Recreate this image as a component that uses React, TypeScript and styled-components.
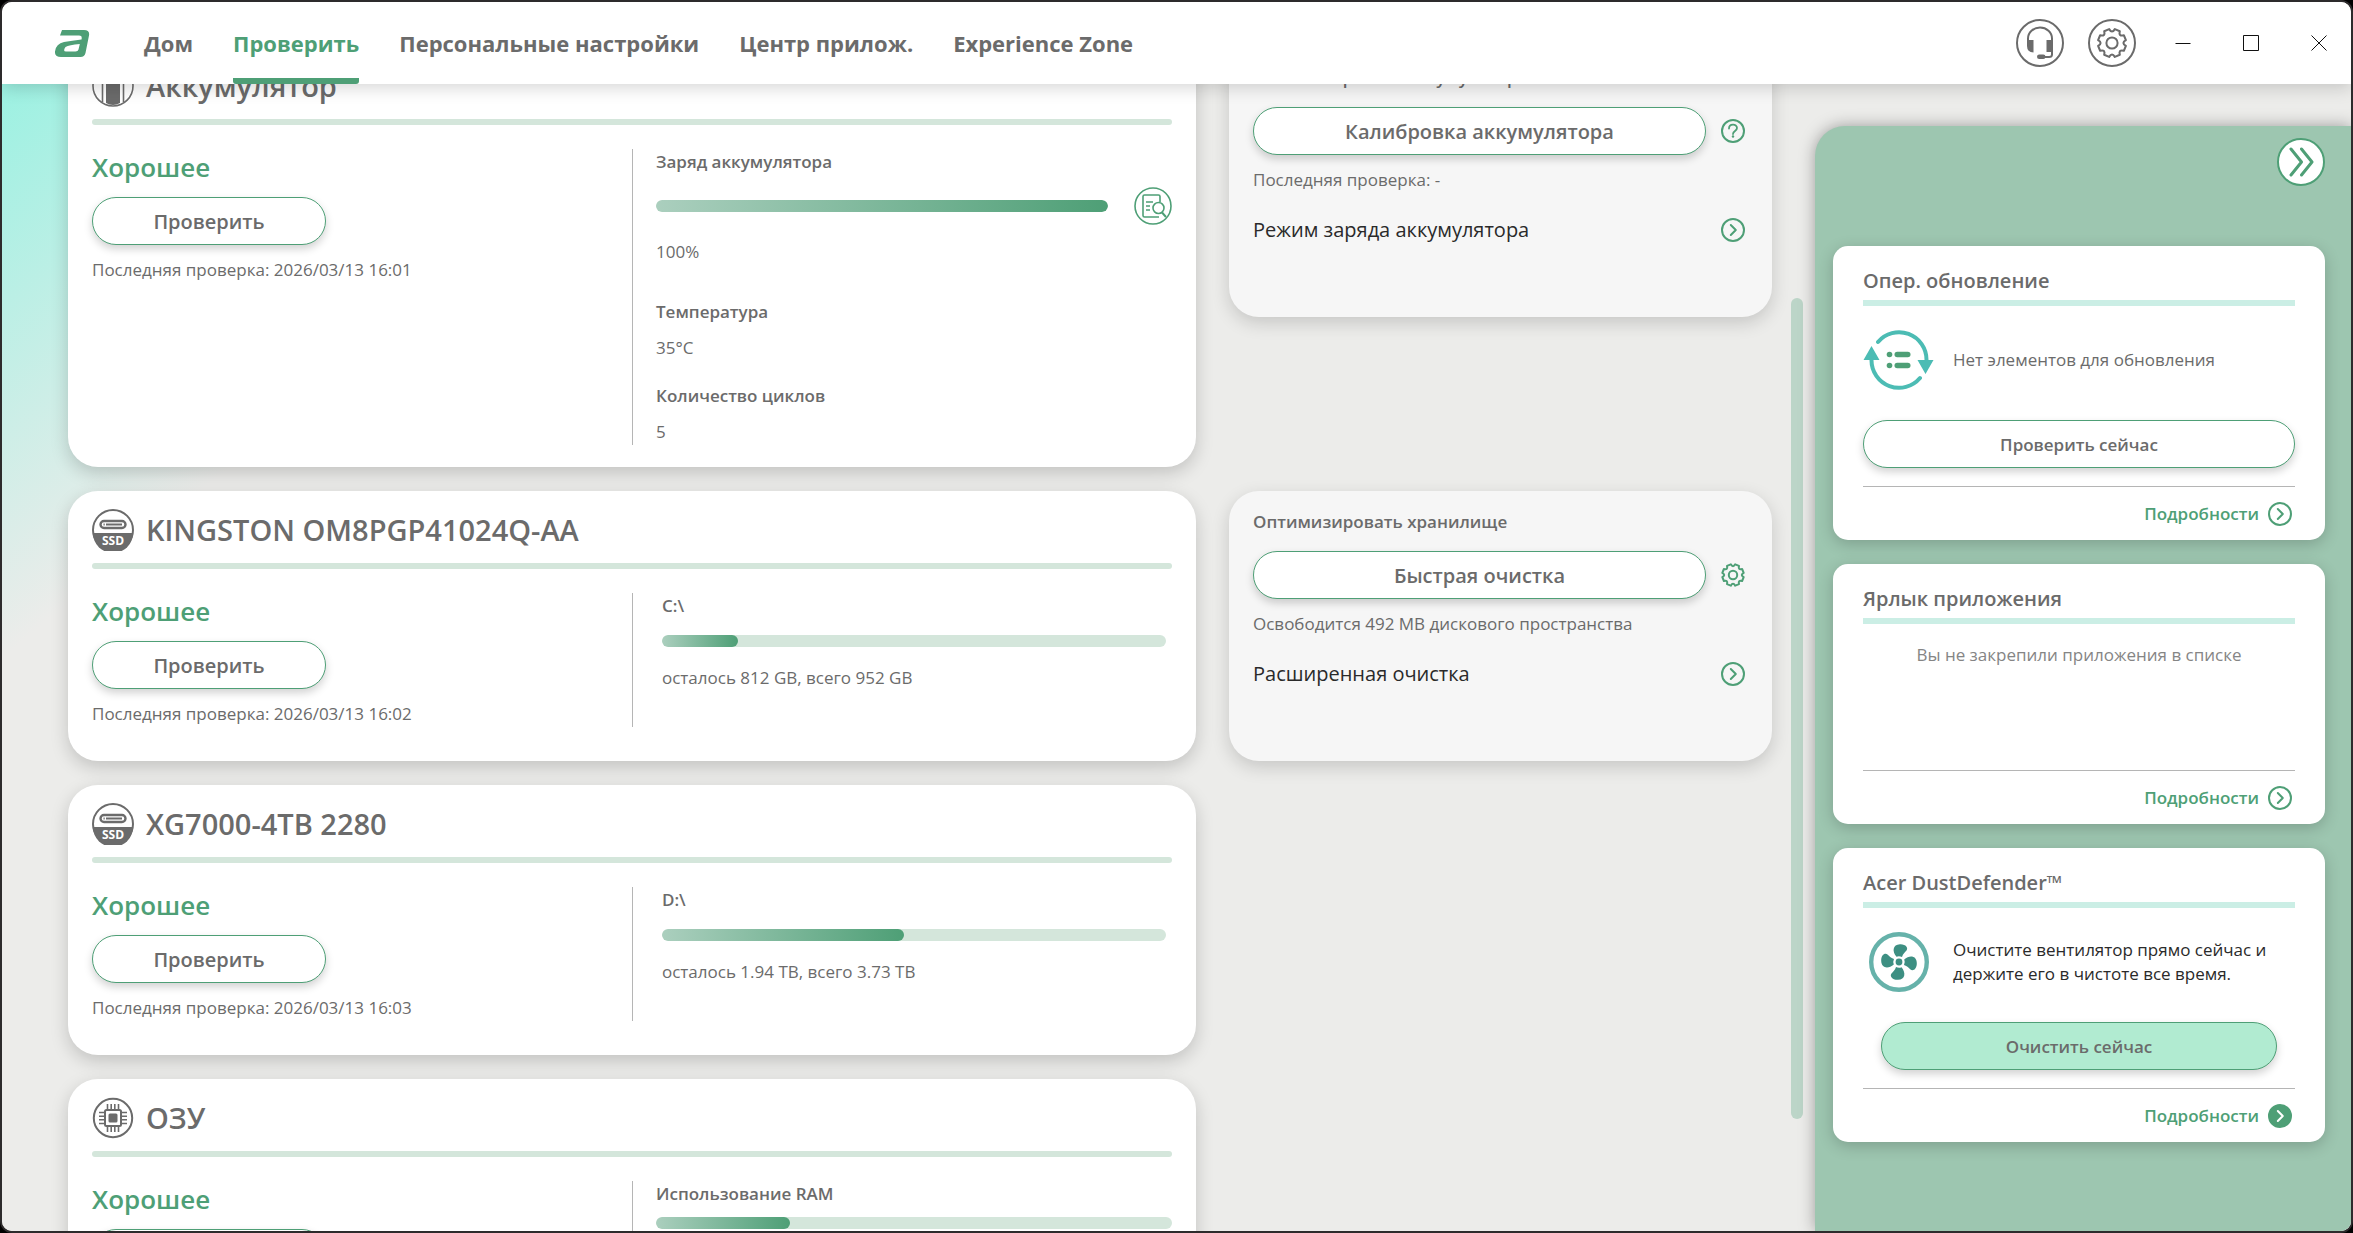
import React, { useLayoutEffect, useRef } from "react";
import styled, { createGlobalStyle } from "styled-components";

const green = "#4e9f76";
const grey = "#6b6b6b";

const GlobalStyle = createGlobalStyle`
  *, *::before, *::after { box-sizing: border-box; }
  html, body, #root { height: 100%; }
  body { margin: 0; background: #000; overflow: hidden; }
  body, button { font-family: "Open Sans", "Noto Sans", sans-serif; }
  h1, h2, h3, p { margin: 0; }
  button { padding: 0; border: 0; background: none; color: inherit; cursor: pointer; }
  svg { display: block; flex: none; }
`;

const Window = styled.div`
  display: flex;
  flex-direction: column;
  height: 100vh;
  border: 2px solid #2d2b2c;
  border-radius: 12px;
  overflow: hidden;
  background: #ececea;
  color: ${grey};
`;

const TopBar = styled.header`
  display: flex;
  align-items: stretch;
  flex: none;
  height: 82px;
  padding: 0 24px 0 53px;
  background: #fff;
  box-shadow: 0 4px 16px rgba(0, 0, 0, 0.16);
  position: relative;
  z-index: 2;
`;

const Logo = styled.div`
  display: flex;
  align-items: center;
  margin-right: 54px;
`;

const Nav = styled.nav`
  display: flex;
  gap: 40px;
  flex: 1;
`;

const NavLink = styled.a<{ $active?: boolean }>`
  display: flex;
  align-items: center;
  height: 82px;
  border-top: 6px solid transparent;
  border-bottom: 6px solid transparent;
  border-radius: 3px;
  font-size: 22px;
  line-height: 32px;
  font-weight: 700;
  text-decoration: none;
  white-space: nowrap;
  color: ${(p) => (p.$active ? green : grey)};
  background: ${(p) => (p.$active ? `linear-gradient(${green}, ${green}) bottom / 100% 6px no-repeat border-box` : "none")};
`;

const BarActions = styled.div`
  display: flex;
  align-items: center;
  gap: 24px;
  margin-right: 39px;
`;

const WindowActions = styled.div`
  display: flex;
  align-items: center;
  gap: 52px;
`;

const IconButton = styled.button`
  display: flex;
  align-items: center;
  justify-content: center;
  flex: none;
`;

const Main = styled.div`
  display: flex;
  flex: 1;
  min-height: 0;
  background: linear-gradient(140deg, #9cf1e2 0, #ececea 440px);
`;

const Scroller = styled.main`
  flex: 1;
  min-width: 0;
  overflow: auto;
  scrollbar-width: none;
  padding: 24px 19px 24px 66px;
`;

const Rows = styled.div`
  display: grid;
  grid-template-columns: minmax(0, 1128fr) minmax(0, 543fr);
  gap: 24px 33px;
  align-items: start;
`;

const ScrollTrack = styled.div`
  display: flex;
  flex-direction: column;
  width: 12px;
  margin-right: 12px;
  &::before { content: ""; flex: 214; }
  &::after { content: ""; flex: 112; }
`;

const ScrollThumb = styled.div`
  flex: 821;
  border-radius: 6px;
  background: #bcd5c8;
`;

const Card = styled.section`
  grid-column: 1;
  min-height: 270px;
  padding: 18px 24px 22px;
  border-radius: 30px;
  background: #fff;
  box-shadow: 0 6px 18px rgba(0, 0, 0, 0.18);
`;

const CardHead = styled.div`
  display: flex;
  align-items: center;
  gap: 12px;
  padding-bottom: 12px;
`;

const CardTitle = styled.h2`
  font-size: 29px;
  line-height: 42px;
  font-weight: 600;
`;

const Rule = styled.div`
  height: 6px;
  border-radius: 3px;
  background: #d4e6db;
`;

const CardBody = styled.div`
  display: grid;
  grid-template-columns: 1fr 1fr;
  margin-top: 24px;
`;

const StatusColumn = styled.div`
  display: flex;
  flex-direction: column;
  align-items: flex-start;
  gap: 12px;
`;

const Status = styled.p`
  font-size: 26px;
  line-height: 36px;
  font-weight: 600;
  color: ${green};
`;

const PillButton = styled.button<{ $width?: string; $small?: boolean; $filled?: boolean }>`
  width: ${(p) => p.$width ?? "100%"};
  height: 48px;
  padding-top: 2px;
  border: 1px solid ${green};
  border-radius: 24px;
  background: ${(p) => (p.$filled ? "#b1ebd1" : "#fff")};
  box-shadow: 0 4px 8px rgba(0, 0, 0, 0.18);
  font-size: ${(p) => (p.$small ? "17px" : "20px")};
  line-height: 28px;
  font-weight: 600;
  color: ${grey};
`;

const Note = styled.p`
  font-size: 17px;
  line-height: 26px;
`;

const Label = styled.h3`
  font-size: 17px;
  line-height: 26px;
  font-weight: 600;
`;

const Details = styled.div`
  display: flex;
  flex-direction: column;
  padding-left: 23px;
  border-left: 1px solid #b5b5b5;
`;

const Disk = styled.div`
  display: flex;
  flex-direction: column;
  padding: 0 6px;
`;

const Memory = styled.div`
  display: flex;
  flex-direction: column;
  gap: 10px;
`;

const ChargeRow = styled.div`
  display: flex;
  align-items: center;
  gap: 26px;
  margin: 12px 0 14px;
`;

const Fact = styled.div<{ $gap: number }>`
  display: flex;
  flex-direction: column;
  gap: 10px;
  margin-top: ${(p) => p.$gap}px;
`;

const Track = styled.div`
  flex: 1 0 auto;
  height: 12px;
  max-height: 12px;
  border-radius: 6px;
  background: #d4e6db;
  overflow: hidden;

  ${Disk} & {
    margin: 16px 0 18px;
  }
`;

const Fill = styled.div`
  height: 100%;
  border-radius: 6px;
  background: linear-gradient(90deg, #abcfbe, ${green});
`;

const ToolCard = styled.section`
  grid-column: 2;
  min-height: 270px;
  padding: 18px 27px 24px 24px;
  border-radius: 30px;
  background: #f6f6f6;
  box-shadow: 0 6px 18px rgba(0, 0, 0, 0.16);
`;

const ToolAction = styled.div`
  display: flex;
  align-items: center;
  gap: 15px;
  margin: 16px 0 12px;
  color: ${green};
`;

const ToolLink = styled.button`
  display: flex;
  align-items: center;
  justify-content: space-between;
  width: 100%;
  margin-top: 22px;
  font-size: 20px;
  line-height: 30px;
  color: #2a2a2a;
  svg { color: ${green}; }
`;

const Side = styled.aside`
  display: flex;
  flex-direction: column;
  flex: none;
  width: 536px;
  margin-top: 42px;
  padding: 12px 26px 0 18px;
  border-top-left-radius: 30px;
  background: #9dc6b0;
  box-shadow: 0 0 16px rgba(0, 0, 0, 0.34);
`;

const Collapse = styled(IconButton)`
  align-self: flex-end;
  width: 48px;
  height: 48px;
  border: 2px solid ${green};
  border-radius: 24px;
  background: #fff;
  color: ${green};
`;

const SideCards = styled.div`
  display: flex;
  flex-direction: column;
  gap: 24px;
  margin-top: 60px;
`;

const SideCard = styled.section<{ $minHeight: number }>`
  display: flex;
  flex-direction: column;
  min-height: ${(p) => p.$minHeight}px;
  padding: 20px 30px 0;
  border-radius: 15px;
  background: #fff;
  box-shadow: 0 4px 16px rgba(0, 0, 0, 0.2);
`;

const SideTitle = styled.h2`
  padding-bottom: 4px;
  border-bottom: 6px solid #cbeee5;
  font-size: 20px;
  line-height: 30px;
  font-weight: 600;
`;

const SideInfo = styled.div`
  display: flex;
  align-items: center;
  gap: 18px;
  height: 60px;
  margin: 24px 0 30px;
`;

const SideIcon = styled.div`
  display: flex;
  justify-content: center;
  width: 72px;
`;

const SideText = styled.p<{ $dark?: boolean }>`
  flex: 1;
  font-size: 17px;
  line-height: 24px;
  color: ${(p) => (p.$dark ? "#2a2a2a" : grey)};
`;

const SideEmpty = styled.p`
  margin-top: 18px;
  font-size: 17px;
  line-height: 26px;
  text-align: center;
  color: #858585;
`;

const Inset = styled.div`
  padding: 0 18px;
`;

const SideFoot = styled.div`
  display: flex;
  align-items: flex-start;
  justify-content: flex-end;
  height: 54px;
  margin-top: auto;
  padding: 15px 3px 0;
  border-top: 1px solid #b5b5b5;
`;

const MoreLink = styled.a`
  display: flex;
  align-items: center;
  gap: 9px;
  font-size: 17px;
  line-height: 24px;
  font-weight: 600;
  text-decoration: none;
  color: ${green};
`;

const AcerMark = () => (
  <svg width="35" height="27" viewBox="0 0 35 27" fill={green} fillRule="evenodd" aria-hidden="true">
    <path d="M7 0H29Q35 0 34 5.500L30.500 23Q29.500 27 25.500 27H6Q-.5 27 0 21.500Q1 13.500 9 12Q17 10.500 26.500 9.500Q27.500 5.500 24 5.500H5ZM24.800 14Q14 15 10.500 17Q7.500 21.500 11 21.500H20.500Q23 21.500 23.500 19.500Z" />
  </svg>
);

const gearPath = (() => {
  const teeth = 8;
  const at = (angle: number, r: number) => `${(12 + Math.cos(angle) * r).toFixed(2)} ${(12 + Math.sin(angle) * r).toFixed(2)}`;
  let d = "";
  for (let i = 0; i < teeth; i++) {
    const a = ((i + 0.5) / teeth) * Math.PI * 2 - Math.PI / 2;
    d += `${i === 0 ? "M" : "L"}${at(a - 0.19, 10.9)}L${at(a + 0.19, 10.9)}Q${at(a + Math.PI / teeth, 6.9)} ${at(a + (2 * Math.PI) / teeth - 0.19, 10.9)}`;
  }
  return `${d}Z`;
})();

const Gear = ({ size, stroke }: { size: number; stroke: number }) => (
  <svg width={size} height={size} viewBox="0 0 24 24" fill="none" stroke="currentColor" strokeWidth={stroke} strokeLinejoin="round" aria-hidden="true">
    <path d={gearPath} />
    <circle cx="12" cy="12" r="4.200" />
  </svg>
);

const SettingsIcon = () => (
  <svg width="48" height="48" viewBox="0 0 48 48" fill="none" stroke="currentColor" strokeWidth="2" strokeLinejoin="round" aria-hidden="true">
    <circle cx="24" cy="24" r="23" />
    <path d={gearPath} transform="translate(8.400 8.400) scale(1.300)" strokeWidth="1.600" />
    <circle cx="24" cy="24" r="5.600" />
  </svg>
);

const HeadsetIcon = () => (
  <svg width="48" height="48" viewBox="0 0 48 48" fill="none" stroke="currentColor" strokeWidth="2" aria-hidden="true">
    <circle cx="24" cy="24" r="23" />
    <path d="M12 24v-4.500a12 11 0 0 1 24 0V35.500q0 2.500-3 2.500h-5" />
    <path d="M11 21h6.500v12.500Q11 33 11 27zM37 21h-6.500v12H37z" fill="currentColor" stroke="none" />
    <rect x="21" y="35.500" width="8.500" height="4.500" rx="2.200" fill="currentColor" stroke="none" />
  </svg>
);

const ArrowCircle = ({ filled }: { filled?: boolean }) => (
  <svg width="24" height="24" viewBox="0 0 24 24" fill="none" aria-hidden="true">
    <circle cx="12" cy="12" r="11" stroke="currentColor" strokeWidth="2" fill={filled ? "currentColor" : "none"} />
    <path d="M9.800 7l5 5-5 5" stroke={filled ? "#fff" : "currentColor"} strokeWidth="2" strokeLinecap="round" strokeLinejoin="round" />
  </svg>
);

const HelpIcon = () => (
  <svg width="24" height="24" viewBox="0 0 24 24" fill="none" stroke="currentColor" strokeWidth="2" aria-hidden="true">
    <circle cx="12" cy="12" r="11" />
    <path d="M8 9.500c0-5 8-5 8-.5 0 3-4 3-4 6" strokeWidth="1.800" strokeLinecap="round" />
    <circle cx="12" cy="17.500" r="1.200" fill="currentColor" stroke="none" />
  </svg>
);

const ReportIcon = () => (
  <svg width="38" height="38" viewBox="0 0 38 38" fill="none" stroke={green} strokeWidth="1.600" aria-hidden="true">
    <circle cx="19" cy="19" r="18" />
    <path d="M26 15V9.500q0-1.500-1.500-1.500h-14Q9 8 9 9.500v19q0 1.500 1.500 1.500H25" />
    <path d="M12 15h7M12 19h4M12 23h4" />
    <circle cx="24.500" cy="21" r="5.500" />
    <path d="M28 25.500l4 4.500" strokeWidth="2" />
  </svg>
);

const BatteryIcon = () => (
  <svg width="42" height="42" viewBox="0 0 42 42" fill="none" stroke={grey} strokeWidth="1.600" aria-hidden="true">
    <circle cx="21" cy="21" r="20" />
    <path d="M10.500 37V10h21v27" />
    <path d="M14 38V13h14v25q-7 4-14 0z" fill={grey} stroke="none" />
    <path d="M17 6h8v4h-8z" />
  </svg>
);

const SsdIcon = () => (
  <svg width="42" height="42" viewBox="0 0 42 42" aria-hidden="true">
    <circle cx="21" cy="21" r="20" fill="#fff" stroke={grey} strokeWidth="2" />
    <path d="M1 24h40a20 20 0 0 1-40 0z" fill={grey} />
    <rect x="8.500" y="12" width="25" height="7" rx="3.500" fill="#fff" stroke={grey} strokeWidth="2.400" />
    <path d="M14 15.500h16M11.500 15.500h1.200" stroke={grey} strokeWidth="2" />
    <text x="21" y="36" textAnchor="middle" fontFamily="Open Sans, sans-serif" fontSize="12" fontWeight="700" fill="#fff">SSD</text>
  </svg>
);

const ChipIcon = () => (
  <svg width="42" height="42" viewBox="0 0 42 42" fill="none" stroke={grey} strokeWidth="2" aria-hidden="true">
    <circle cx="21" cy="21" r="19.200" />
    <rect x="13" y="13" width="16" height="16" rx="1.500" />
    <rect x="16.500" y="16.500" width="9" height="9" rx="1.500" fill={grey} stroke="none" />
    <path
      d="M15.500 7v5M19.200 7v5M22.800 7v5M26.500 7v5M15.500 30v5M19.200 30v5M22.800 30v5M26.500 30v5M7 15.500h5M7 19.200h5M7 22.800h5M7 26.500h5M30 15.500h5M30 19.200h5M30 22.800h5M30 26.500h5"
      strokeWidth="1.600"
    />
  </svg>
);

const UpdateIcon = () => (
  <svg width="72" height="60" viewBox="0 0 72 60" fill="none" aria-hidden="true">
    <g stroke="#4cbcb4" strokeWidth="4" strokeLinecap="round">
      <path d="M15 12A27.500 27.500 0 0 1 63.500 30" />
      <path d="M57 48A27.500 27.500 0 0 1 8.500 30" />
    </g>
    <path d="M0.500 30L8.500 16l8 14zM54.500 30h16l-8 14z" fill="#4cbcb4" />
    <g fill={green}>
      <circle cx="26.500" cy="24.500" r="2.800" />
      <circle cx="26.500" cy="35.500" r="2.800" />
      <rect x="31.500" y="21.800" width="16" height="5.500" rx="2.700" />
      <rect x="31.500" y="32.800" width="16" height="5.500" rx="2.700" />
    </g>
  </svg>
);

const FanIcon = () => (
  <svg width="60" height="60" viewBox="0 0 60 60" aria-hidden="true">
    <circle cx="30" cy="30" r="27.800" fill="none" stroke="#66b2aa" strokeWidth="4.400" />
    <g fill="#3d8f82">
      {[0, 90, 180, 270].map((a) => (
        <path
          key={a}
          d="M27.500 24.800C23 19.500 23.500 12.500 31 12.200C37 12 39.500 16 37.500 18.500C36 20.500 34 21.500 33 25Q30 23.600 27.500 24.800Z"
          transform={`rotate(${a} 30 30)`}
        />
      ))}
      <circle cx="30" cy="30" r="3.400" />
    </g>
  </svg>
);

const ChevronsIcon = () => (
  <svg width="26" height="30" viewBox="0 0 26 30" fill="none" stroke="currentColor" strokeWidth="3" strokeLinecap="round" strokeLinejoin="round" aria-hidden="true">
    <path d="M3 2l10.500 13L3 28M13.500 2L24 15 13.500 28" />
  </svg>
);

const MinimizeIcon = () => (
  <svg width="16" height="16" viewBox="0 0 16 16" stroke="#111" aria-hidden="true"><path d="M.5 8.500h15" /></svg>
);
const MaximizeIcon = () => (
  <svg width="16" height="16" viewBox="0 0 16 16" fill="none" stroke="#111" aria-hidden="true"><path d="M.5.5h15v15H.5z" /></svg>
);
const CloseIcon = () => (
  <svg width="16" height="16" viewBox="0 0 16 16" stroke="#111" aria-hidden="true"><path d="M.5.5l15 15M15.500.5l-15 15" /></svg>
);

const Progress = ({ value, label }: { value: number; label: string }) => (
  <Track role="progressbar" aria-label={label} aria-valuenow={value} aria-valuemin={0} aria-valuemax={100}>
    <Fill style={{ width: `${value}%` }} />
  </Track>
);

type DeviceProps = { icon: React.ReactNode; title: string; checked: string; children: React.ReactNode };

const DeviceCard = ({ icon, title, checked, children }: DeviceProps) => (
  <Card>
    <CardHead>
      {icon}
      <CardTitle>{title}</CardTitle>
    </CardHead>
    <Rule />
    <CardBody>
      <StatusColumn>
        <Status>Хорошее</Status>
        <PillButton $width="234px">Проверить</PillButton>
        <Note>Последняя проверка: {checked}</Note>
      </StatusColumn>
      <Details>{children}</Details>
    </CardBody>
  </Card>
);

const DiskUsage = ({ drive, used, text }: { drive: string; used: number; text: string }) => (
  <Disk>
    <Label>{drive}</Label>
    <Progress value={used} label={drive} />
    <Note>{text}</Note>
  </Disk>
);

type ToolProps = { title: string; action: string; note: string; link: string; icon: React.ReactNode; iconLabel: string };

const Tool = ({ title, action, note, link, icon, iconLabel }: ToolProps) => (
  <ToolCard>
    <Label>{title}</Label>
    <ToolAction>
      <PillButton>{action}</PillButton>
      <IconButton aria-label={iconLabel}>{icon}</IconButton>
    </ToolAction>
    <Note>{note}</Note>
    <ToolLink>
      {link}
      <ArrowCircle />
    </ToolLink>
  </ToolCard>
);

const More = ({ filled }: { filled?: boolean }) => (
  <SideFoot>
    <MoreLink href="#">
      Подробности
      <ArrowCircle filled={filled} />
    </MoreLink>
  </SideFoot>
);

const navItems = ["Дом", "Проверить", "Персональные настройки", "Центр прилож.", "Experience Zone"];

export default function App() {
  const scroller = useRef<HTMLElement>(null);

  useLayoutEffect(() => {
    if (scroller.current) scroller.current.scrollTop = 61;
  }, []);

  return (
    <>
      <GlobalStyle />
      <Window>
        <TopBar>
          <Logo>
            <AcerMark />
          </Logo>
          <Nav>
            {navItems.map((item) => (
              <NavLink key={item} href="#" $active={item === "Проверить"}>
                {item}
              </NavLink>
            ))}
          </Nav>
          <BarActions>
            <IconButton aria-label="Поддержка"><HeadsetIcon /></IconButton>
            <IconButton aria-label="Настройки"><SettingsIcon /></IconButton>
          </BarActions>
          <WindowActions>
            <IconButton aria-label="Свернуть"><MinimizeIcon /></IconButton>
            <IconButton aria-label="Развернуть"><MaximizeIcon /></IconButton>
            <IconButton aria-label="Закрыть"><CloseIcon /></IconButton>
          </WindowActions>
        </TopBar>
        <Main>
          <Scroller ref={scroller}>
            <Rows>
              <DeviceCard icon={<BatteryIcon />} title="Аккумулятор" checked="2026/03/13 16:01">
                <Label>Заряд аккумулятора</Label>
                <ChargeRow>
                  <Progress value={100} label="Заряд аккумулятора" />
                  <IconButton aria-label="Отчет"><ReportIcon /></IconButton>
                </ChargeRow>
                <Note>100%</Note>
                <Fact $gap={34}>
                  <Label>Температура</Label>
                  <Note>35°C</Note>
                </Fact>
                <Fact $gap={22}>
                  <Label>Количество циклов</Label>
                  <Note>5</Note>
                </Fact>
              </DeviceCard>
              <Tool
                title="Оптимизировать аккумулятор"
                action="Калибровка аккумулятора"
                note="Последняя проверка: -"
                link="Режим заряда аккумулятора"
                icon={<HelpIcon />}
                iconLabel="Справка"
              />
              <DeviceCard icon={<SsdIcon />} title="KINGSTON OM8PGP41024Q-AA" checked="2026/03/13 16:02">
                <DiskUsage drive="C:\" used={15} text="осталось 812 GB, всего 952 GB" />
              </DeviceCard>
              <Tool
                title="Оптимизировать хранилище"
                action="Быстрая очистка"
                note="Освободится 492 MB дискового пространства"
                link="Расширенная очистка"
                icon={<Gear size={24} stroke={2} />}
                iconLabel="Параметры очистки"
              />
              <DeviceCard icon={<SsdIcon />} title="XG7000-4TB 2280" checked="2026/03/13 16:03">
                <DiskUsage drive="D:\" used={48} text="осталось 1.94 TB, всего 3.73 TB" />
              </DeviceCard>
              <DeviceCard icon={<ChipIcon />} title="ОЗУ" checked="2026/03/13 16:03">
                <Memory>
                  <Label>Использование RAM</Label>
                  <Progress value={26} label="Использование RAM" />
                </Memory>
              </DeviceCard>
            </Rows>
          </Scroller>
          <ScrollTrack>
            <ScrollThumb />
          </ScrollTrack>
          <Side>
            <Collapse aria-label="Свернуть панель"><ChevronsIcon /></Collapse>
            <SideCards>
              <SideCard $minHeight={294}>
                <SideTitle>Опер. обновление</SideTitle>
                <SideInfo>
                  <SideIcon><UpdateIcon /></SideIcon>
                  <SideText>Нет элементов для обновления</SideText>
                </SideInfo>
                <PillButton $small>Проверить сейчас</PillButton>
                <More />
              </SideCard>
              <SideCard $minHeight={260}>
                <SideTitle>Ярлык приложения</SideTitle>
                <SideEmpty>Вы не закрепили приложения в списке</SideEmpty>
                <More />
              </SideCard>
              <SideCard $minHeight={294}>
                <SideTitle>Acer DustDefender™</SideTitle>
                <SideInfo>
                  <SideIcon><FanIcon /></SideIcon>
                  <SideText $dark>Очистите вентилятор прямо сейчас и держите его в чистоте все время.</SideText>
                </SideInfo>
                <Inset>
                  <PillButton $small $filled>Очистить сейчас</PillButton>
                </Inset>
                <More filled />
              </SideCard>
            </SideCards>
          </Side>
        </Main>
      </Window>
    </>
  );
}
